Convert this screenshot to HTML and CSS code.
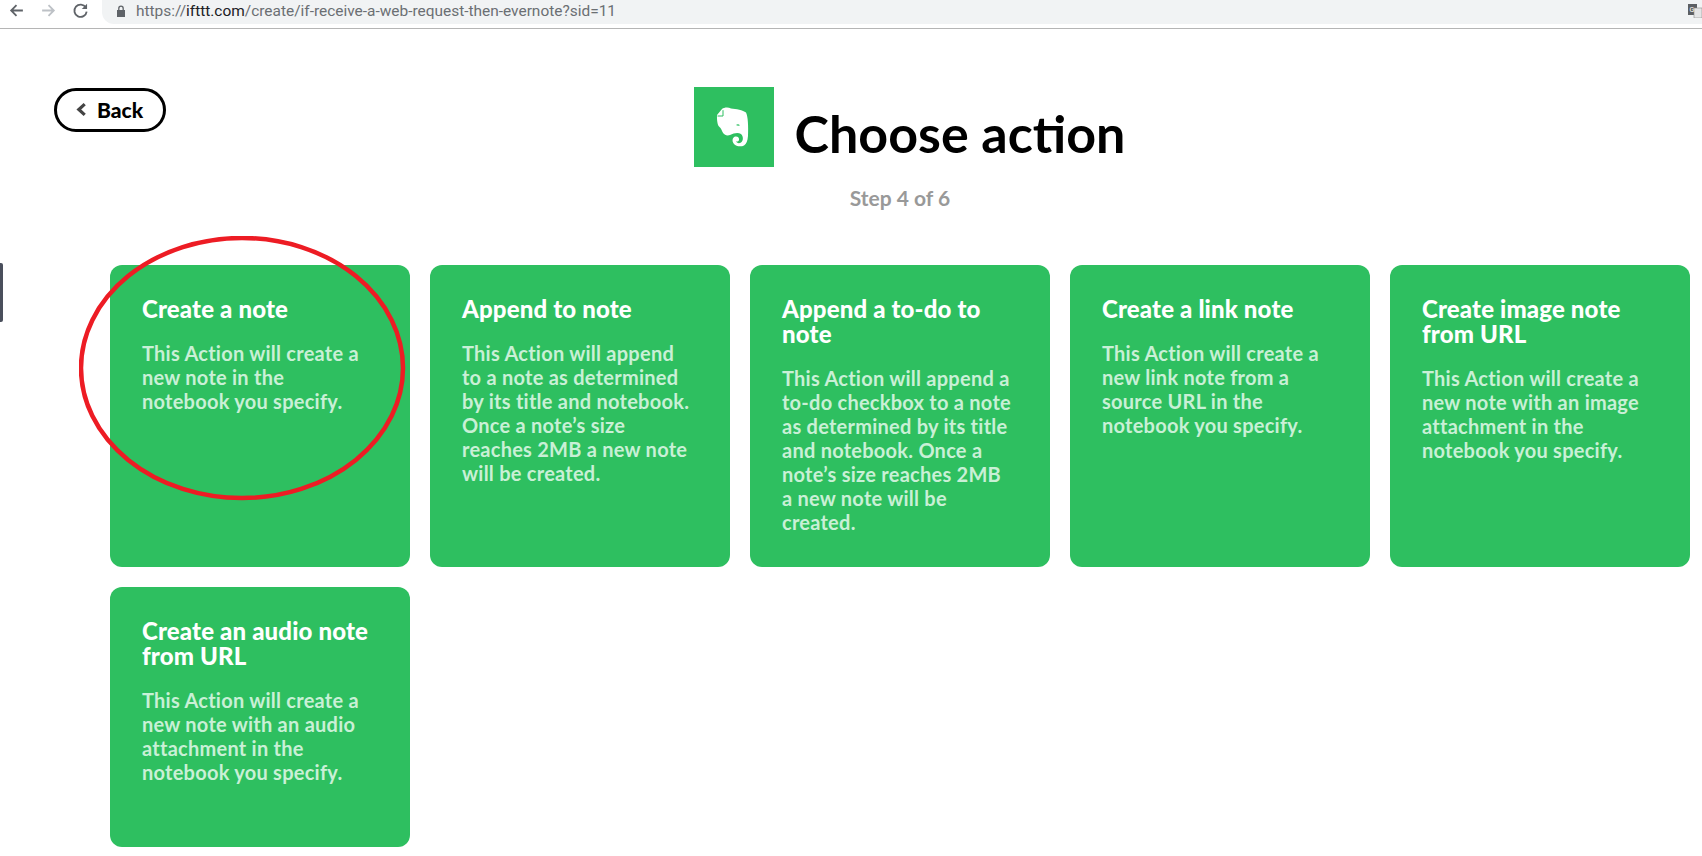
FILE: index.html
```html
<!DOCTYPE html>
<html lang="en">
<head>
<meta charset="utf-8">
<title>Choose action</title>
<link rel="stylesheet" href="styles.css">
</head>
<body>
<header class="browser">
  <nav class="browser-nav">
    <svg class="nav-icon" viewBox="0 0 16 16"><path class="stroke-dark" d="M14 8H3M8 3L3 8l5 5"/></svg>
    <svg class="nav-icon" viewBox="0 0 16 16"><path class="stroke-light" d="M2 8h11M8 3l5 5-5 5"/></svg>
    <svg class="nav-icon" viewBox="0 0 16 16"><path class="stroke-dark" d="M13 5.2A5.8 5.8 0 1 0 13.8 9"/><path class="fill-dark" d="M14.2 1.6v5h-5z"/></svg>
  </nav>
  <div class="omnibox">
    <svg class="lock" viewBox="0 0 10 12"><path class="fill-dark" d="M1 5h8v7H1z"/><path class="lock-arc" d="M2.8 5.5V3.4a2.2 2.2 0 0 1 4.4 0v2.1"/></svg>
    <span class="url">https://<b class="url-host">ifttt.com</b>/create/if-receive-a-web-request-then-evernote?sid=11</span>
    <svg class="translate" viewBox="0 0 14 14"><path class="translate-back" d="M0 0h9v11H0z"/><path class="translate-front" d="M6 4h8v10H6z"/><text x="1.5" y="8" class="translate-text">G</text></svg>
  </div>
</header>

<span class="side-tab"></span>

<main class="page">
  <div class="top">
    <a class="back" href="#">
      <svg class="back-icon" viewBox="0 0 10 14"><path d="M8 2L2.500 7 8 12"/></svg>
      <span>Back</span>
    </a>
    <div class="heading">
      <div class="title-row">
        <span class="service-logo">
          <svg viewBox="0 0 33 40" class="elephant">
            <path class="ele-body" d="M1 8L6 2C8 .5 12 0 15 1.500 20 2 27 3 30 5.500 32 9 32.500 20 32 29 31.500 34 30.500 37 28 38.500 25 40 20 39.500 18 37 15.500 34 16.500 30 19.500 29.500 22 29.300 23.500 31 23 33 22.500 34.500 21 35 20 34.300 20.500 36 23 36.800 25 35.500 27.500 34 27.500 29 25 27 22 25 18 26 14 28 11 29 8 28 6.500 25 5.500 23 5 21 3 19.500 1.500 18 .8 13 1 8z"/>
            <path class="ele-fold" d="M1.500 9H7V3.200"/>
            <path class="ele-eye" d="M20 18c1.500-1 3-.8 4 .5-1.500.3-3 .2-4-.5z"/>
          </svg>
        </span>
        <h1 class="title">Choose action</h1>
      </div>
      <p class="step">Step 4 of 6</p>
    </div>
  </div>

  <section class="cards">
    <a class="card" href="#">
      <h2 class="card-title">Create a note</h2>
      <p class="card-text">This Action will create a new note in the notebook you specify.</p>
    </a>
    <a class="card" href="#">
      <h2 class="card-title">Append to note</h2>
      <p class="card-text">This Action will append to a note as determined by its title and notebook. Once a note’s size reaches 2MB a new note will be created.</p>
    </a>
    <a class="card" href="#">
      <h2 class="card-title">Append a to-do to note</h2>
      <p class="card-text">This Action will append a to-do checkbox to a note as determined by its title and notebook. Once a note’s size reaches 2MB a new note will be created.</p>
    </a>
    <a class="card" href="#">
      <h2 class="card-title">Create a link note</h2>
      <p class="card-text">This Action will create a new link note from a source URL in the notebook you specify.</p>
    </a>
    <a class="card" href="#">
      <h2 class="card-title">Create image note from URL</h2>
      <p class="card-text">This Action will create a new note with an image attachment in the notebook you specify.</p>
    </a>
    <a class="card" href="#">
      <h2 class="card-title">Create an audio note from URL</h2>
      <p class="card-text">This Action will create a new note with an audio attachment in the notebook you specify.</p>
    </a>
  </section>
</main>

<svg class="annotation" viewBox="0 0 330 268">
  <ellipse cx="163" cy="132" rx="161" ry="130"/>
</svg>
</body>
</html>
```
FILE: styles.css
```css
* { box-sizing: border-box; }

html, body { margin: 0; padding: 0; }

body {
  position: relative;
  width: 1702px;
  height: 856px;
  overflow: hidden;
  background: #fff;
  color: #000;
  font-family: Lato, "Open Sans", sans-serif;
}

/* Browser chrome */
.browser {
  display: flex;
  align-items: flex-start;
  height: 29px;
  border-bottom: 1px solid #b5b5b5;
}

.browser-nav {
  display: flex;
  gap: 15px;
  width: 102px;
  padding: 2px 0 0 8px;
  flex: none;
}

.nav-icon { width: 17px; height: 17px; }

.stroke-dark, .stroke-light { fill: none; stroke-width: 1.7; }
.stroke-dark { stroke: #5f6368; }
.stroke-light { stroke: #bdc1c6; }
.fill-dark { fill: #5f6368; }

.omnibox {
  display: flex;
  align-items: center;
  flex: 1;
  height: 24px;
  padding: 0 0 3px 14px;
  background: #f1f3f4;
  border-radius: 0 0 0 12px;
}

.lock { width: 10px; height: 12px; flex: none; margin-right: 10px; }
.lock-arc { fill: none; stroke: #5f6368; stroke-width: 1.3; }

.url {
  font-family: Roboto, sans-serif;
  font-size: 15.45px;
  color: #6b6f73;
  white-space: nowrap;
}

.url-host { font-weight: 400; color: #202124; }

.translate { width: 14px; height: 14px; margin-left: auto; }
.translate-back { fill: #5c5f63; }
.translate-front { fill: #e4e5e6; stroke: #8a8a8a; stroke-width: .6; }
.translate-text { fill: #fff; font-size: 7px; font-family: Roboto, sans-serif; }

/* Side tab */
.side-tab {
  position: absolute;
  left: 0;
  top: 263px;
  width: 3px;
  height: 59px;
  background: #4a4f5c;
  border-radius: 0 2px 2px 0;
}

/* Page */
.page { padding: 0 0 0 54px; }

.top {
  display: flex;
  align-items: flex-start;
  height: 236px;
}

.back {
  display: flex;
  align-items: center;
  gap: 10px;
  flex: none;
  width: 112px;
  height: 44px;
  margin-top: 59px;
  padding: 0 0 2px 19px;
  border: 3.5px solid #000;
  border-radius: 22px;
  color: #000;
  font-size: 21px;
  font-weight: 900;
  text-decoration: none;
}

.back-icon {
  width: 11px;
  height: 15px;
  flex: none;
  fill: none;
  stroke: #444;
  stroke-width: 3;
}

.heading {
  flex: 1;
  padding: 58px 68px 0 0;
  text-align: center;
}

.title-row {
  display: flex;
  justify-content: center;
  align-items: flex-start;
  gap: 21px;
  padding-left: 19px;
}

.service-logo {
  display: flex;
  align-items: center;
  justify-content: center;
  width: 80px;
  height: 80px;
  background: #2ebf60;
}

.elephant { width: 33px; height: 40px; margin-left: -2px; }
.ele-body { fill: #fff; }
.ele-fold { fill: none; stroke: #2ebf60; stroke-width: 1; }
.ele-eye { fill: #2ebf60; }

.title {
  margin: 0;
  padding-top: 6px;
  font-size: 52px;
  line-height: 80px;
  font-weight: 700;
}

.step {
  margin: 13px 0 0;
  font-size: 21px;
  line-height: 24px;
  font-weight: 700;
  color: #999;
}

.cards {
  display: grid;
  grid-template-columns: repeat(5, 300px);
  grid-auto-rows: min-content;
  gap: 20px;
  padding-left: 56px;
}

.card {
  display: block;
  padding: 31px 36px 0 32px;
  min-height: 260px;
  background: #2ebf60;
  border-radius: 12px;
  color: #fff;
  text-decoration: none;
}

.card:nth-child(-n+5) { height: 302px; }

.card-title {
  margin: 0;
  font-size: 24px;
  line-height: 25px;
  font-weight: 900;
  letter-spacing: .15px;
}

.card-text {
  margin: 20px 0 0;
  font-size: 20px;
  line-height: 24px;
  font-weight: 700;
  letter-spacing: .25px;
  color: #c9f0d6;
}

/* Hand-drawn annotation over the first card */
.annotation {
  position: absolute;
  left: 79px;
  top: 236px;
  width: 330px;
  height: 268px;
  fill: none;
  stroke: #ed1c24;
  stroke-width: 4.5;
}
```
